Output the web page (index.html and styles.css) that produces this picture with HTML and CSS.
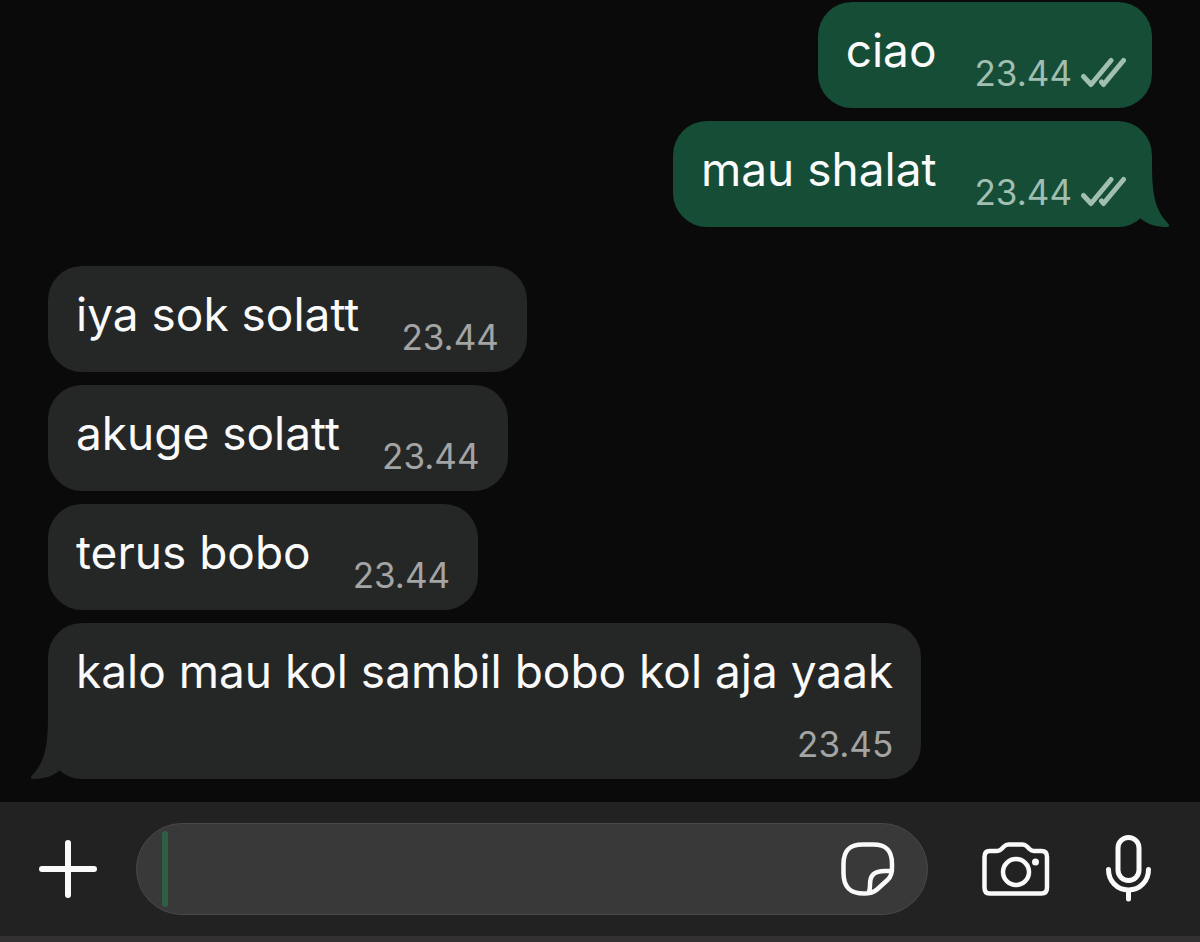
FILE: index.html
```html
<!DOCTYPE html>
<html lang="id">
	<head>
		<meta charset="UTF-8">
		<meta name="viewport" content="width=device-width, initial-scale=1.0">
		<title>Chat</title>
		<link rel="stylesheet" href="styles.css">
	</head>

	<body>
		<!-- shared shapes -->
		<svg class="sprite" aria-hidden="true">
			<symbol id="checks" viewBox="0 0 46 32">
				<path d="M3.500 19.500 11 27.500 31 3.500M21.500 25 23.500 27.500 43.500 3.500"></path>
			</symbol>
			<symbol id="tail" viewBox="0 0 48 70">
				<path d="M31 6C31 38 34 53 47.500 67Q49 70 46 70C36 70 28 68 20 62L10 40Z"></path>
			</symbol>
		</svg>

		<main class="chat">
			<section class="group out">
				<div class="bubble">
					<p>ciao</p>
					<div class="meta"><time>23.44</time><svg class="checks"><use href="#checks"></use></svg></div>
				</div>
				<div class="bubble">
					<p>mau shalat</p>
					<div class="meta"><time>23.44</time><svg class="checks"><use href="#checks"></use></svg></div>
					<svg class="tail"><use href="#tail"></use></svg>
				</div>
			</section>
			<section class="group in">
				<div class="bubble">
					<p>iya sok solatt</p>
					<div class="meta"><time>23.44</time></div>
				</div>
				<div class="bubble">
					<p>akuge solatt</p>
					<div class="meta"><time>23.44</time></div>
				</div>
				<div class="bubble">
					<p>terus bobo</p>
					<div class="meta"><time>23.44</time></div>
				</div>
				<div class="bubble long">
					<p>kalo mau kol sambil bobo kol aja yaak</p>
					<div class="meta"><time>23.45</time></div>
					<svg class="tail"><use href="#tail"></use></svg>
				</div>
			</section>
		</main>

		<form class="composer">
			<button type="button" aria-label="Lampirkan">
				<svg width="58" height="58" viewBox="0 0 58 58">
					<path d="M29 3V55M3 29H55" stroke-width="6"></path>
				</svg>
			</button>
			<div class="field">
				<span class="caret"></span>
				<input type="text" aria-label="Pesan">
				<button type="button" aria-label="Stiker">
					<svg width="54" height="54" viewBox="0 0 54 54">
						<path d="M22 2.500H32C46 2.500 51 9 51 22V26C51 31 50.500 34 47 37.500L36 47.500C32 51 28 51.500 23 51.500C9 51.500 2.500 45 2.500 31V22C2.500 9 8 2.500 22 2.500ZM51 29H44C33 29 29 33 29 43C29 46 29 49 27 51" stroke-width="4.500"></path>
					</svg>
				</button>
			</div>
			<div class="actions">
				<button type="button" aria-label="Kamera">
					<svg width="68" height="54" viewBox="0 0 68 54">
						<path d="M7.500 9H15C17 9 18 8.500 19.500 7L22 4.500C23.500 3 24.500 2.500 26.500 2.500H40.500C42.500 2.500 43.500 3 45 4.500L47.500 7C49 8.500 50 9 52 9H59.500C63 9 65 11 65 15V45.500C65 49.500 63 51.500 59.500 51.500H7.500C4 51.500 2.500 49.500 2.500 45.500V15C2.500 11 4 9 7.500 9Z" stroke-width="4.500"></path>
						<circle cx="34" cy="30" r="13" stroke-width="4.500"></circle>
						<circle class="dot" cx="53.500" cy="20" r="3.500"></circle>
					</svg>
				</button>
				<button type="button" aria-label="Rekam suara">
					<svg width="46" height="68" viewBox="0 0 46 68">
						<rect x="12" y="2.500" width="21" height="43" rx="10.500" stroke-width="5"></rect>
						<path d="M2.500 34.500C2.500 46 11 55 22.500 55S42.500 46 42.500 34.500M22.500 56V64" stroke-width="5"></path>
					</svg>
				</button>
			</div>
		</form>
	</body>

</html>
```

FILE: styles.css
```css
* {
	box-sizing: border-box;
	padding: 0;
	margin: 0;
}

body {
	display: flex;
	flex-direction: column;
	min-height: 100vh;
	background: #0a0a0a;
	color: #fafafa;
	font-family: Inter, "Liberation Sans", sans-serif;
}

svg {
	display: block;
	fill: none;
	stroke: currentColor;
	stroke-linecap: round;
	stroke-linejoin: round;
}

.sprite {
	position: absolute;
	width: 0;
	height: 0;
}

.chat {
	flex: 1;
	display: flex;
	flex-direction: column;
	gap: 39px;
	padding: 2px 48px 22px;
}

.group {
	display: flex;
	flex-direction: column;
	align-items: flex-start;
	gap: 13px;
}

.out {
	align-items: flex-end;
}

.bubble {
	position: relative;
	display: flex;
	align-items: flex-end;
	column-gap: 42px;
	padding: 18px 28px 15px;
	border-radius: 34px;
	background: #252726;
}

.out .bubble {
	column-gap: 38px;
	padding-right: 26px;
	background: #154d37;
}

.bubble p {
	margin-bottom: 13px;
	font-size: 46px;
	line-height: 60px;
}

.long {
	flex-direction: column;
	row-gap: 10px;
}

.meta {
	display: flex;
	align-items: center;
	gap: 8px;
	color: #a3a4a4;
	font-size: 35px;
	line-height: 40px;
}

.long .meta {
	align-self: flex-end;
}

.out .meta {
	color: #a0bfb1;
}

.checks {
	width: 46px;
	height: 32px;
	stroke-width: 5;
}

.tail {
	position: absolute;
	bottom: 0;
	width: 48px;
	height: 70px;
	fill: #252726;
	stroke: none;
}

.out .tail {
	right: -17px;
	fill: #154d37;
}

.in .tail {
	left: -17px;
	transform: scaleX(-1);
}

.composer {
	display: flex;
	align-items: center;
	padding: 21px 48px 21px 39px;
	border-bottom: 6px solid #333132;
	background: #222;
}

button {
	border: 0;
	background: none;
	color: #fafafa;
}

.field {
	flex: 1;
	display: flex;
	align-items: center;
	min-width: 0;
	height: 92px;
	margin: 0 54px 0 39px;
	padding: 0 32px 0 25px;
	border: 1px solid #484848;
	border-radius: 46px;
	background: #393939;
}

.caret {
	width: 6px;
	height: 76px;
	border-radius: 3px;
	background: #2d5f45;
}

.field input {
	flex: 1;
	min-width: 0;
	height: 76px;
	border: 0;
	outline: 0;
	background: none;
	color: inherit;
	font: inherit;
	font-size: 46px;
}

.actions {
	display: flex;
	align-items: center;
	gap: 56px;
}

.dot {
	fill: currentColor;
	stroke: none;
}
```
